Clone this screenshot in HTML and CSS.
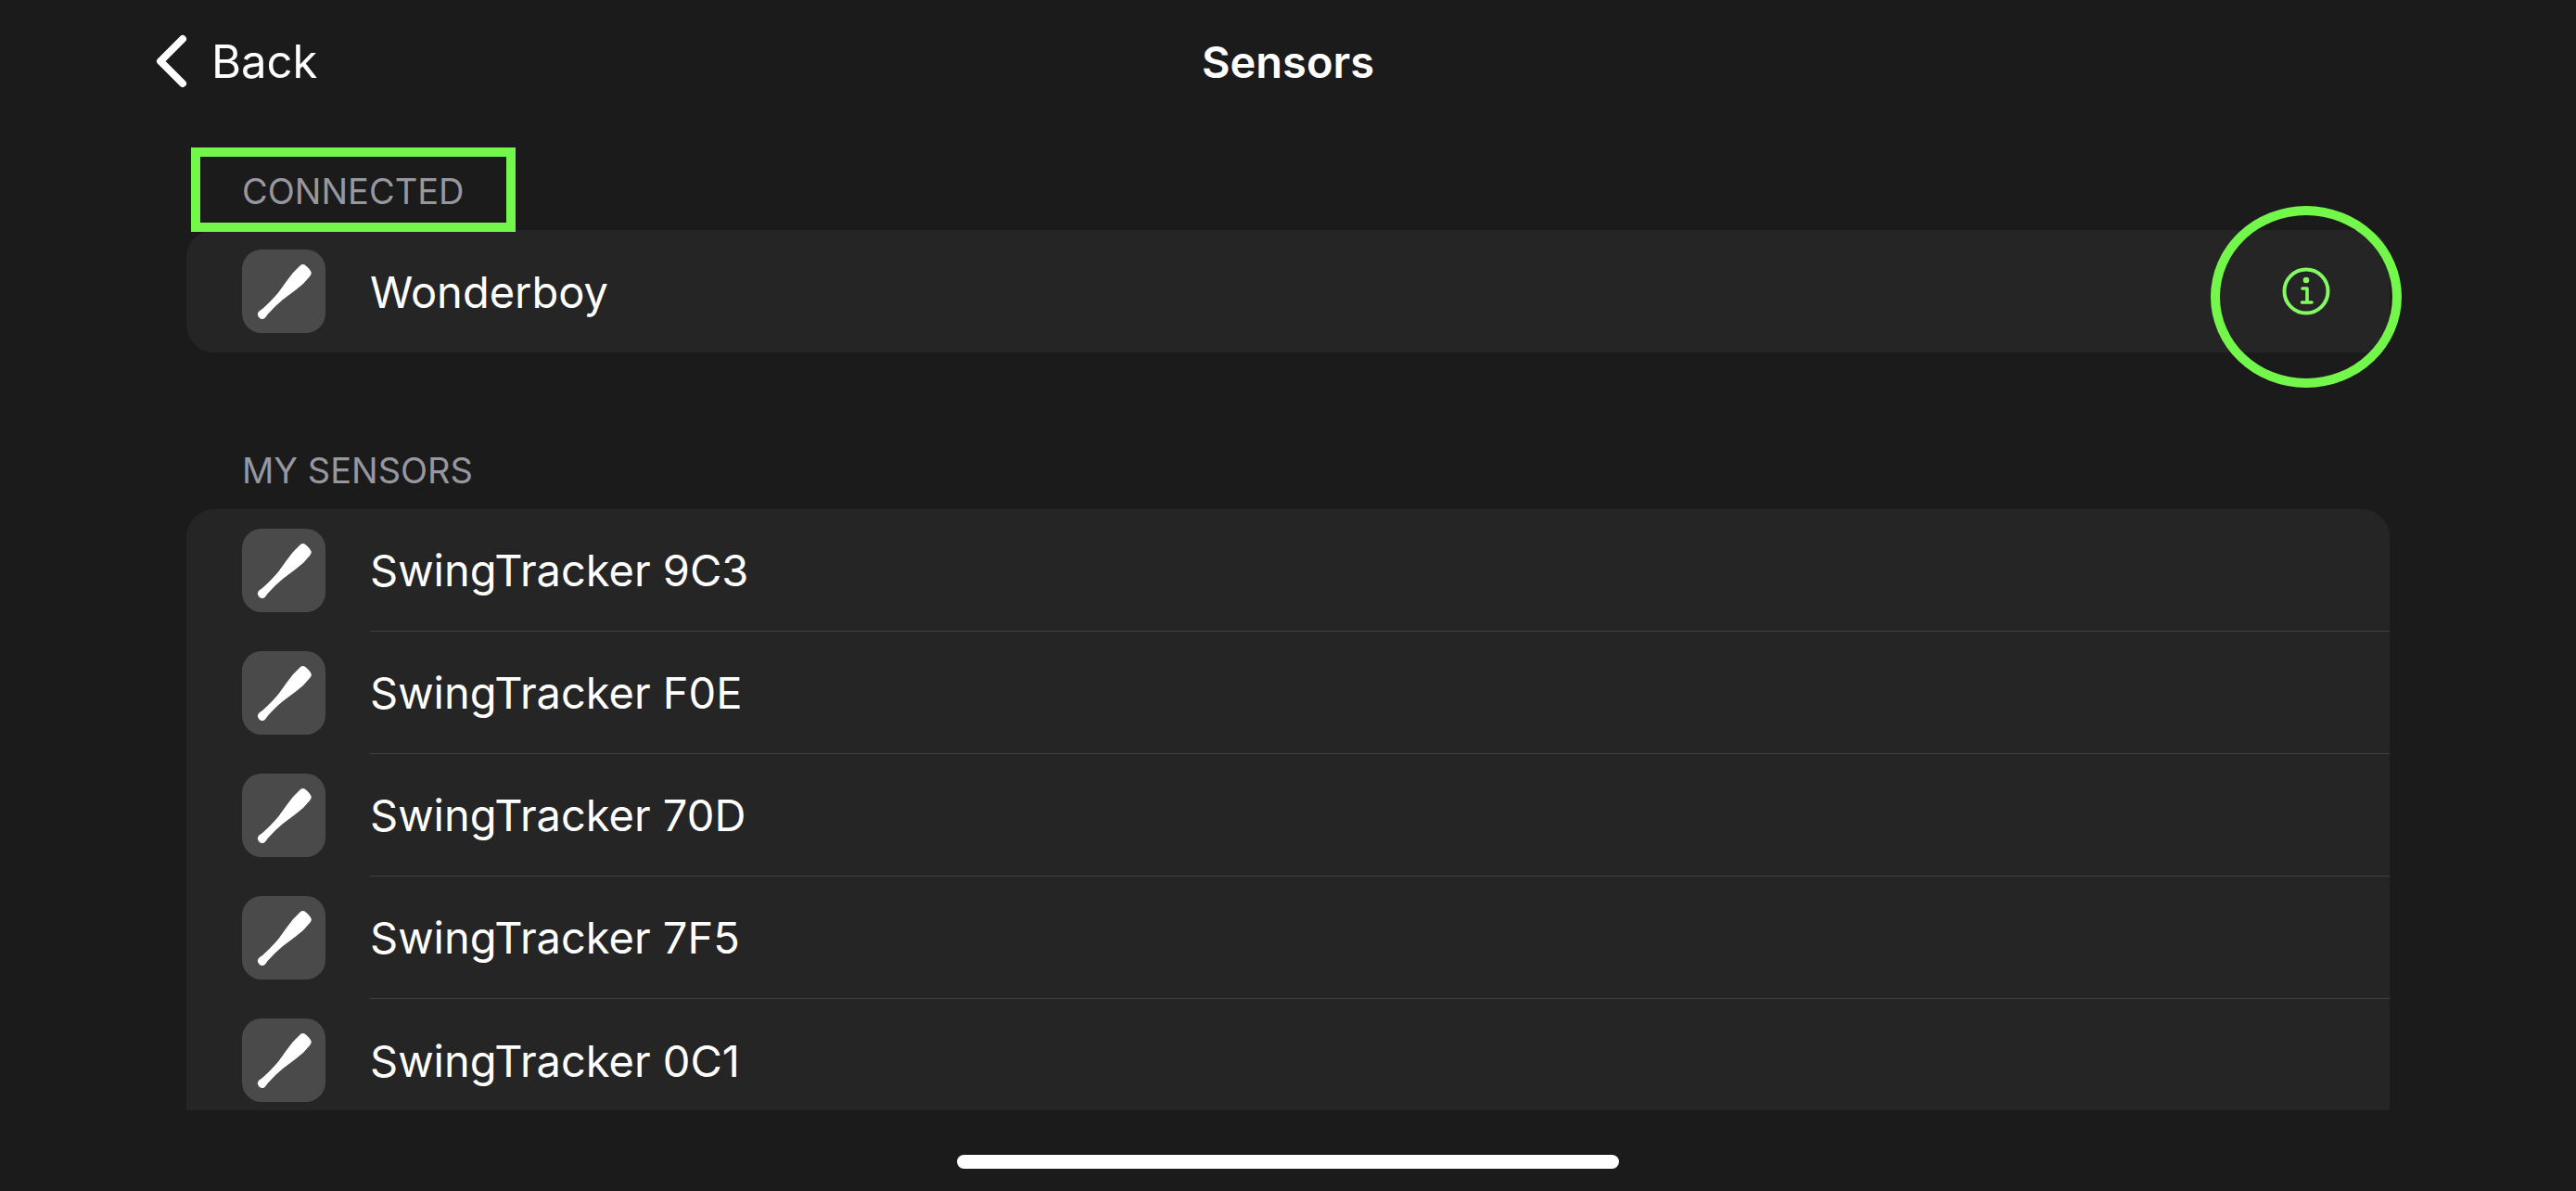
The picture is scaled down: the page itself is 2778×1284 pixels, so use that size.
FILE: index.html
```html
<!DOCTYPE html>
<html lang="en">
<head>
    <meta charset="UTF-8">
    <meta name="viewport" content="width=device-width, initial-scale=1.0">
    <title>Sensors</title>
    <link rel="stylesheet" href="styles.css">
</head>
<body>
    <!-- shared bat icon -->
    <svg class="defs" aria-hidden="true">
        <symbol id="bat" viewBox="0 0 90 90">
            <path fill="#fff" d="M62.500 17.500Q66 14.500 69.500 18Q73 21 74.500 24Q75.500 26 73.500 28.500Q67 37 58 43.500L44 54Q36 60.500 27.500 70Q26.500 71.500 25 73.500Q22 76.500 18.500 73.500Q15.500 70 18 67Q19.500 65.500 22 64Q33 54 39.500 46L48.500 33.500Q54.500 24.500 62.500 17.500Z"/>
        </symbol>
    </svg>

    <header class="navbar">
        <a href="#" class="back-link">
            <svg class="chevron" viewBox="0 0 34 58" aria-hidden="true">
                <path d="M29 5L5 29L29 53" fill="none" stroke="#fff" stroke-width="8" stroke-linecap="round" stroke-linejoin="round"/>
            </svg>
            Back
        </a>
        <h1 class="title">Sensors</h1>
    </header>

    <main class="content">
        <section class="group">
            <h2 class="group-title"><span class="highlight">CONNECTED</span></h2>
            <ul class="card">
                <li class="row">
                    <svg class="icon" aria-hidden="true"><use href="#bat"/></svg>
                    <span class="name">Wonderboy</span>
                    <button type="button" class="info-btn" aria-label="Sensor info">
                        <svg class="info-icon" viewBox="0 0 52 52" fill="none" stroke="#83f962" aria-hidden="true">
                            <circle cx="26" cy="26" r="23.500" stroke-width="4"/>
                            <circle cx="26" cy="14" r="3.300" fill="#83f962" stroke="none"/>
                            <path d="M22 23H27V38M21.500 38H32" stroke-width="3.600" stroke-linecap="round" stroke-linejoin="round"/>
                        </svg>
                    </button>
                </li>
            </ul>
        </section>

        <section class="group">
            <h2 class="group-title">MY SENSORS</h2>
            <ul class="card card-open">
                <li class="row">
                    <svg class="icon" aria-hidden="true"><use href="#bat"/></svg>
                    <span class="name">SwingTracker 9C3</span>
                </li>
                <li class="row">
                    <svg class="icon" aria-hidden="true"><use href="#bat"/></svg>
                    <span class="name">SwingTracker F0E</span>
                </li>
                <li class="row">
                    <svg class="icon" aria-hidden="true"><use href="#bat"/></svg>
                    <span class="name">SwingTracker 70D</span>
                </li>
                <li class="row">
                    <svg class="icon" aria-hidden="true"><use href="#bat"/></svg>
                    <span class="name">SwingTracker 7F5</span>
                </li>
                <li class="row">
                    <svg class="icon" aria-hidden="true"><use href="#bat"/></svg>
                    <span class="name">SwingTracker 0C1</span>
                </li>
            </ul>
        </section>
    </main>

    <footer class="home-bar">
        <div class="home-indicator"></div>
    </footer>
</body>
</html>
```
FILE: styles.css
```css
*,
*::after {
    box-sizing: border-box;
}
body {
    display: flex;
    flex-direction: column;
    height: 100vh;
    margin: 0;
    background-color: #1b1b1b;
    color: #fff;
    font-family: Inter, "Liberation Sans", sans-serif;
    overflow: hidden;
}
.defs {
    display: none;
}
.navbar {
    display: grid;
    grid-template-columns: 1fr auto 1fr;
    align-items: center;
    height: 132px;
    padding: 0 168px;
}
.back-link {
    display: flex;
    align-items: center;
    gap: 26px;
    justify-self: start;
    color: #fff;
    font-size: 49px;
    text-decoration: none;
}
.chevron {
    width: 34px;
    height: 58px;
}
.title {
    margin: 0;
    font-size: 47px;
    font-weight: 600;
}
.content {
    flex: 1;
    min-height: 0;
    padding: 0 201px;
    overflow: hidden;
}
.group {
    margin-bottom: 84px;
}
.group-title {
    margin: 0;
    padding: 50px 60px 18px;
    color: #98979f;
    font-size: 38px;
    font-weight: 400;
    line-height: 48px;
}
.group + .group .group-title {
    padding-top: 19px;
}
.card {
    margin: 0;
    padding: 0;
    list-style: none;
    background-color: #252525;
    border-radius: 30px;
}
/* list runs on below the fold */
.card-open {
    border-radius: 30px 30px 0 0;
}
.row {
    display: flex;
    align-items: center;
    height: 132px;
    padding-left: 60px;
}
.icon {
    width: 90px;
    height: 90px;
    margin-right: 48px;
    background-color: #4a4a4a;
    border-radius: 21px;
}
.name {
    display: flex;
    flex: 1;
    align-items: center;
    height: 132px;
    font-size: 47px;
}
.row:not(:last-child) .name {
    border-bottom: 1px solid #414141;
}
.info-btn {
    position: relative;
    width: 52px;
    height: 52px;
    margin-right: 64px;
    padding: 0;
    border: none;
    background: none;
    cursor: pointer;
}
.info-icon {
    display: block;
    width: 52px;
    height: 52px;
}

/* green callouts */
.highlight {
    position: relative;
}
.highlight::after {
    content: "";
    position: absolute;
    inset: -24px -56px -21px -55px;
    border: 10px solid #73f74b;
}
.info-btn::after {
    content: "";
    position: absolute;
    top: -66px;
    left: -77px;
    width: 206px;
    height: 196px;
    border: 10px solid #73f74b;
    border-radius: 50%;
}
.home-bar {
    display: flex;
    justify-content: center;
    height: 87px;
    padding-top: 48px;
}
.home-indicator {
    width: 714px;
    height: 15px;
    background-color: #fff;
    border-radius: 8px;
}
```
